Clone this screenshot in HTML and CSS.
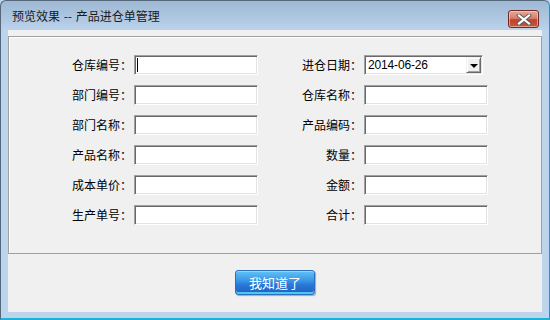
FILE: index.html
```html
<!DOCTYPE html>
<html lang="zh-CN">
<head>
<meta charset="utf-8">
<title>预览效果 -- 产品进仓单管理</title>
<link rel="stylesheet" href="styles.css">
</head>
<body>
<div class="window">
  <div class="titlebar">
    <div class="title">预览效果 -- 产品进仓单管理</div>
    <div class="close">
      <svg width="16" height="11" viewBox="0 0 16 11">
        <path d="M3 1.5 L13 9.5 M13 1.5 L3 9.5" stroke="#5a5a5a" stroke-width="4" stroke-linecap="square"/>
        <path d="M3 1.5 L13 9.5 M13 1.5 L3 9.5" stroke="#ffffff" stroke-width="2.2" stroke-linecap="square"/>
      </svg>
    </div>
  </div>
  <div class="client">
    <div class="panel">
      <div class="form">
        <label class="lbl">仓库编号：</label>
        <div class="field"><span class="caret"></span></div>
        <label class="lbl">进仓日期：</label>
        <div class="combo">
          <span class="combo-text">2014-06-26</span>
          <span class="combo-btn"><span class="arrow"></span></span>
        </div>

        <label class="lbl">部门编号：</label>
        <div class="field"></div>
        <label class="lbl">仓库名称：</label>
        <div class="field"></div>

        <label class="lbl">部门名称：</label>
        <div class="field"></div>
        <label class="lbl">产品编码：</label>
        <div class="field"></div>

        <label class="lbl">产品名称：</label>
        <div class="field"></div>
        <label class="lbl">数量：</label>
        <div class="field"></div>

        <label class="lbl">成本单价：</label>
        <div class="field"></div>
        <label class="lbl">金额：</label>
        <div class="field"></div>

        <label class="lbl">生产单号：</label>
        <div class="field"></div>
        <label class="lbl">合计：</label>
        <div class="field"></div>
      </div>
    </div>
    <div class="footer">
      <button class="ok">我知道了</button>
    </div>
  </div>
</div>
</body>
</html>
```

FILE: styles.css
```css
* { box-sizing: border-box; }
html, body { margin: 0; padding: 0; }
body {
  width: 550px;
  height: 320px;
  overflow: hidden;
  background: #bcd4ec;
  font-family: "Noto Sans CJK SC", "Liberation Sans", sans-serif;
  font-size: 12px;
  color: #000;
}
.window {
  width: 550px;
  height: 320px;
  border: 1px solid #55687c;
  border-right-color: #2f8fb8;
  border-bottom: 2px solid #1bb3d8;
  border-radius: 6px 6px 0 0;
  background: linear-gradient(#9fb9d4 0px, #b3cbe4 22px, #bcd4ec 30px, #bcd4ec 100%);
  padding: 0 7px;
  display: flex;
  flex-direction: column;
}
.titlebar {
  height: 29px;
  display: flex;
  align-items: flex-start;
  justify-content: space-between;
}
.title {
  margin-top: 9px;
  margin-left: 4px;
  line-height: 12px;
  font-size: 12px;
  color: #1a1a1a;
  word-spacing: 1px;
}
.close {
  margin-top: 9px;
  margin-right: 3px;
  width: 31px;
  height: 18px;
  border: 1px solid #6e2a24;
  border-radius: 3px;
  background: linear-gradient(#e6a89a 0%, #d7806c 45%, #c0432d 55%, #c8553c 100%);
  box-shadow: inset 0 0 0 1px rgba(255,220,210,0.55);
  display: flex;
  align-items: center;
  justify-content: center;
}
.close svg { display: block; }
.client {
  width: 534px;
  height: 282px;
  background: #f0f0f0;
  display: flex;
  flex-direction: column;
}
.panel {
  margin-top: 6px;
  height: 218px;
  border: 1px solid #a0a0a0;
  box-shadow: inset 1px 1px 0 #ffffff;
  padding: 18px 0 0 63px;
}
.form {
  display: grid;
  grid-template-columns: 60px 124px 102px 124px;
  column-gap: 2px;
  row-gap: 10px;
  grid-auto-rows: 20px;
}
.lbl {
  display: flex;
  align-items: center;
  justify-content: flex-end;
  white-space: nowrap;
  font-size: 12px;
  line-height: 12px;
  color: #000;
}
.field, .combo {
  height: 20px;
  background: #fff;
  border: 1px solid;
  border-color: #a0a0a0 #ffffff #ffffff #a0a0a0;
  box-shadow: inset 1px 1px 0 #696969, inset -1px -1px 0 #e3e3e3;
  display: flex;
  align-items: center;
  padding-left: 2px;
}
.caret {
  width: 1px;
  height: 14px;
  background: #000;
}
.combo {
  width: 119px;
  padding-left: 3px;
  padding-right: 1px;
  justify-content: space-between;
}
.combo-text {
  font-family: "Liberation Sans", Arial, sans-serif;
  font-size: 12px;
  line-height: 12px;
  letter-spacing: -0.15px;
}
.combo-btn {
  width: 15px;
  height: 16px;
  background: #f0f0f0;
  border: 1px solid;
  border-color: #f0f0f0 #696969 #696969 #f0f0f0;
  box-shadow: inset 1px 1px 0 #ffffff, inset -1px -1px 0 #a0a0a0;
  display: flex;
  align-items: center;
  justify-content: center;
}
.arrow {
  width: 0;
  height: 0;
  border-left: 4px solid transparent;
  border-right: 4px solid transparent;
  border-top: 4px solid #000;
  margin-top: 1px;
}
.footer {
  flex: 1;
  display: flex;
  justify-content: center;
  align-items: flex-start;
  padding-top: 16px;
}
.ok {
  width: 80px;
  height: 25px;
  margin: 0;
  padding: 0;
  border: 1px solid #2a6fc0;
  border-radius: 3px;
  background: linear-gradient(#62c2f6 0%, #3a9ae8 40%, #2a78d6 60%, #1f5fc2 100%);
  box-shadow: inset 0 1px 0 rgba(255,255,255,0.35), inset 0 -2px 0 #4ec6f0, 1px 1px 1px rgba(0,0,0,0.3);
  color: #fff;
  font-family: "Noto Sans CJK SC", sans-serif;
  font-size: 13px;
  line-height: 13px;
  cursor: pointer;
}
```
